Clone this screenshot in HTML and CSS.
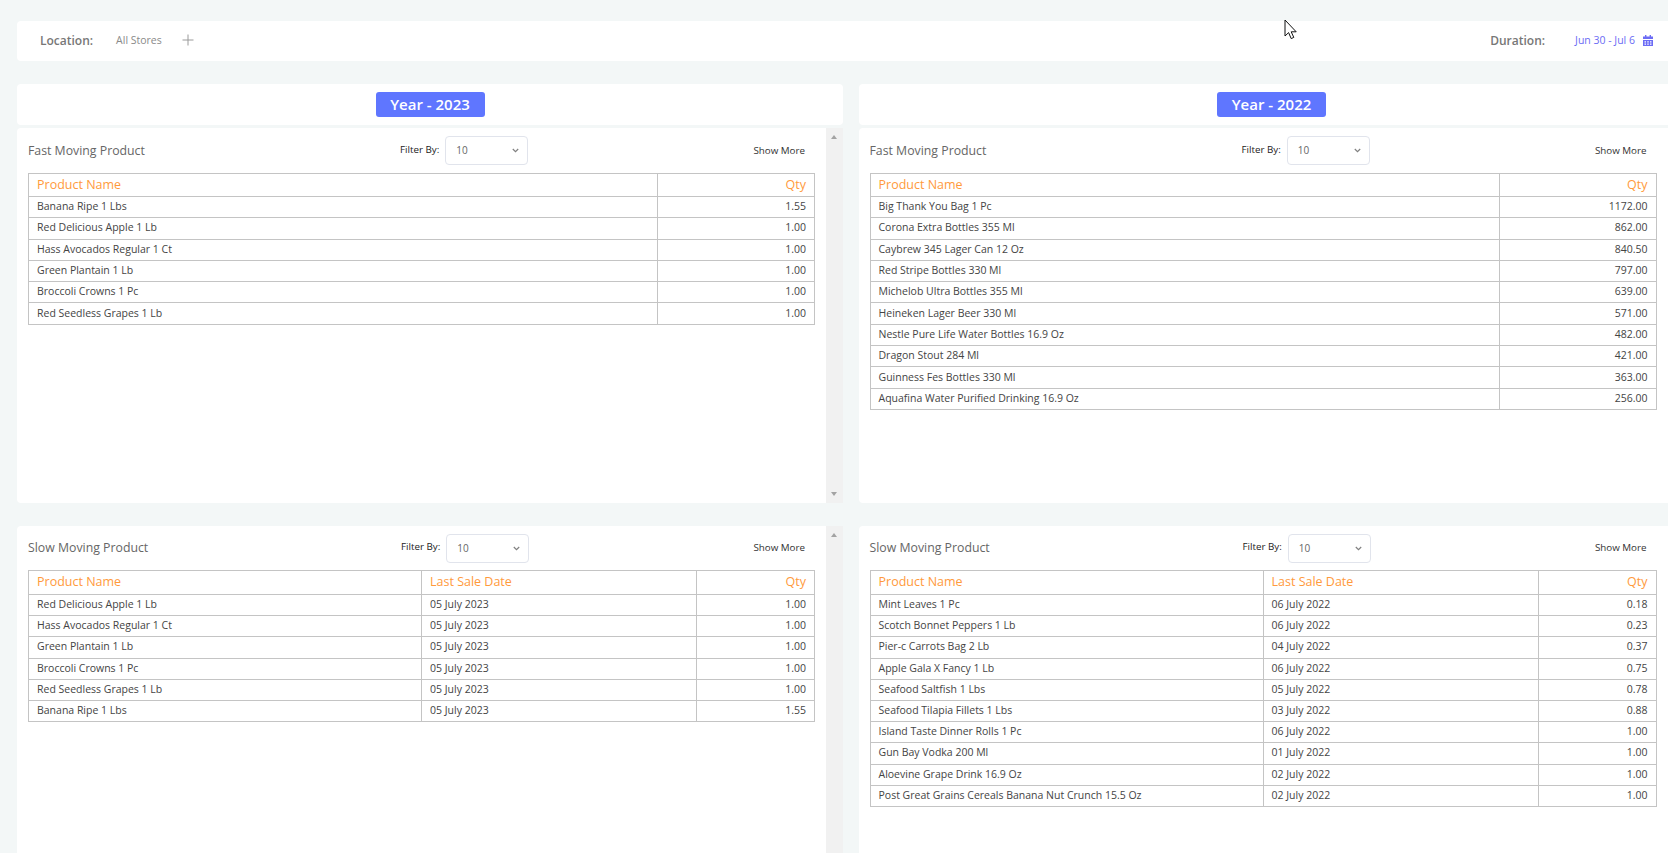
FILE: index.html
```html
<!DOCTYPE html>
<html>
  <head>
    <title>Moving Products</title>
    <link rel="stylesheet" href="styles.css">
  </head>
  <body>
    <div class="topbar">
      <span class="bar-label">Location:</span>
      <span class="stores">All Stores</span>
      <svg class="plus" width="12" height="12" viewBox="0 0 12 12"><path d="M6 0.5V11.5M0.5 6H11.5" stroke="#9a9a9a" stroke-width="1" fill="none"/></svg>
      <span class="bar-label duration">Duration:</span>
      <span class="dates">Jun 30 - Jul 6</span>
      <svg class="calendar" width="10" height="11" viewBox="0 0 10 11"><path d="M2 0h1.4v1.5H6.600V0H8v1.5h2V4H0V1.500h2zM0 5h10v6H0zM1.500 6.200v1.200h1.500V6.200zM4.250 6.200v1.200h1.500V6.200zM7 6.200v1.200h1.500V6.200zM1.500 8.500v1.200h1.500V8.500zM4.250 8.500v1.200h1.500V8.500zM7 8.500v1.200h1.500V8.500z" fill="#6c6cf5" fill-rule="evenodd"/></svg>
    </div>

    <div class="columns">
      <div class="col">
        <div class="yearbar"><span class="badge">Year - 2023</span></div>
        <div class="box">
          <div class="card">
            <div class="head">
              <span class="title">Fast Moving Product</span>
              <span class="filter">Filter By:</span>
              <span class="select">10 <svg width="7" height="5" viewBox="0 0 7 5"><path d="M0.800 1L3.500 3.700L6.200 1" stroke="#808080" stroke-width="1.200" fill="none"/></svg></span>
              <span class="more">Show More</span>
            </div>
            <table>
              <tr><th>Product Name</th><th class="qty qty-fast">Qty</th></tr>
              <tr><td>Banana Ripe 1 Lbs</td><td class="qty">1.55</td></tr>
              <tr><td>Red Delicious Apple 1 Lb</td><td class="qty">1.00</td></tr>
              <tr><td>Hass Avocados Regular 1 Ct</td><td class="qty">1.00</td></tr>
              <tr><td>Green Plantain 1 Lb</td><td class="qty">1.00</td></tr>
              <tr><td>Broccoli Crowns 1 Pc</td><td class="qty">1.00</td></tr>
              <tr><td>Red Seedless Grapes 1 Lb</td><td class="qty">1.00</td></tr>
            </table>
          </div>
          <div class="track"><i class="up"></i><i class="down"></i></div>
        </div>
        <div class="box slow">
          <div class="card">
            <div class="head">
              <span class="title">Slow Moving Product</span>
              <span class="filter">Filter By:</span>
              <span class="select">10 <svg width="7" height="5" viewBox="0 0 7 5"><path d="M0.800 1L3.500 3.700L6.200 1" stroke="#808080" stroke-width="1.200" fill="none"/></svg></span>
              <span class="more">Show More</span>
            </div>
            <table>
              <tr><th class="name-slow">Product Name</th><th class="date">Last Sale Date</th><th class="qty">Qty</th></tr>
              <tr><td>Red Delicious Apple 1 Lb</td><td>05 July 2023</td><td class="qty">1.00</td></tr>
              <tr><td>Hass Avocados Regular 1 Ct</td><td>05 July 2023</td><td class="qty">1.00</td></tr>
              <tr><td>Green Plantain 1 Lb</td><td>05 July 2023</td><td class="qty">1.00</td></tr>
              <tr><td>Broccoli Crowns 1 Pc</td><td>05 July 2023</td><td class="qty">1.00</td></tr>
              <tr><td>Red Seedless Grapes 1 Lb</td><td>05 July 2023</td><td class="qty">1.00</td></tr>
              <tr><td>Banana Ripe 1 Lbs</td><td>05 July 2023</td><td class="qty">1.55</td></tr>
            </table>
          </div>
          <div class="track"><i class="up"></i></div>
        </div>
      </div>

      <div class="col">
        <div class="yearbar"><span class="badge">Year - 2022</span></div>
        <div class="box">
          <div class="card">
            <div class="head">
              <span class="title">Fast Moving Product</span>
              <span class="filter">Filter By:</span>
              <span class="select">10 <svg width="7" height="5" viewBox="0 0 7 5"><path d="M0.800 1L3.500 3.700L6.200 1" stroke="#808080" stroke-width="1.200" fill="none"/></svg></span>
              <span class="more">Show More</span>
            </div>
            <table>
              <tr><th>Product Name</th><th class="qty qty-fast">Qty</th></tr>
              <tr><td>Big Thank You Bag 1 Pc</td><td class="qty">1172.00</td></tr>
              <tr><td>Corona Extra Bottles 355 Ml</td><td class="qty">862.00</td></tr>
              <tr><td>Caybrew 345 Lager Can 12 Oz</td><td class="qty">840.50</td></tr>
              <tr><td>Red Stripe Bottles 330 Ml</td><td class="qty">797.00</td></tr>
              <tr><td>Michelob Ultra Bottles 355 Ml</td><td class="qty">639.00</td></tr>
              <tr><td>Heineken Lager Beer 330 Ml</td><td class="qty">571.00</td></tr>
              <tr><td>Nestle Pure Life Water Bottles 16.9 Oz</td><td class="qty">482.00</td></tr>
              <tr><td>Dragon Stout 284 Ml</td><td class="qty">421.00</td></tr>
              <tr><td>Guinness Fes Bottles 330 Ml</td><td class="qty">363.00</td></tr>
              <tr><td>Aquafina Water Purified Drinking 16.9 Oz</td><td class="qty">256.00</td></tr>
            </table>
          </div>
          <div class="track"></div>
        </div>
        <div class="box slow">
          <div class="card">
            <div class="head">
              <span class="title">Slow Moving Product</span>
              <span class="filter">Filter By:</span>
              <span class="select">10 <svg width="7" height="5" viewBox="0 0 7 5"><path d="M0.800 1L3.500 3.700L6.200 1" stroke="#808080" stroke-width="1.200" fill="none"/></svg></span>
              <span class="more">Show More</span>
            </div>
            <table>
              <tr><th class="name-slow">Product Name</th><th class="date">Last Sale Date</th><th class="qty">Qty</th></tr>
              <tr><td>Mint Leaves 1 Pc</td><td>06 July 2022</td><td class="qty">0.18</td></tr>
              <tr><td>Scotch Bonnet Peppers 1 Lb</td><td>06 July 2022</td><td class="qty">0.23</td></tr>
              <tr><td>Pier-c Carrots Bag 2 Lb</td><td>04 July 2022</td><td class="qty">0.37</td></tr>
              <tr><td>Apple Gala X Fancy 1 Lb</td><td>06 July 2022</td><td class="qty">0.75</td></tr>
              <tr><td>Seafood Saltfish 1 Lbs</td><td>05 July 2022</td><td class="qty">0.78</td></tr>
              <tr><td>Seafood Tilapia Fillets 1 Lbs</td><td>03 July 2022</td><td class="qty">0.88</td></tr>
              <tr><td>Island Taste Dinner Rolls 1 Pc</td><td>06 July 2022</td><td class="qty">1.00</td></tr>
              <tr><td>Gun Bay Vodka 200 Ml</td><td>01 July 2022</td><td class="qty">1.00</td></tr>
              <tr><td>Aloevine Grape Drink 16.9 Oz</td><td>02 July 2022</td><td class="qty">1.00</td></tr>
              <tr><td>Post Great Grains Cereals Banana Nut Crunch 15.5 Oz</td><td>02 July 2022</td><td class="qty">1.00</td></tr>
            </table>
          </div>
          <div class="track"></div>
        </div>
      </div>
    </div>

    <svg class="pointer" width="14" height="21" viewBox="0 0 14 21"><path d="M1 1V17L4.600 13.600L7.200 19.600L9.800 18.400L7.200 12.800H12.200z" fill="#fff" stroke="#111" stroke-width="1"/></svg>
  </body>
</html>
```

FILE: styles.css
```css
html,
body {
  height: 853px;
  overflow: hidden;
}
body {
  margin: 0;
  padding: 21px 0 0 17px;
  background-color: #f3f7f7;
  font-family: "Open Sans", sans-serif;
  color: #444;
  box-sizing: border-box;
}
.topbar {
  display: flex;
  align-items: center;
  height: 40px;
  padding: 0 15px 2px 23px;
  box-sizing: border-box;
  background: #fff;
  border-radius: 4px 0 0 4px;
  font-size: 10.500px;
}
.bar-label {
  font-size: 12px;
  font-weight: 600;
  color: #777;
}
.stores {
  margin-left: 23px;
  color: #8a8a8a;
}
.plus {
  margin-left: 20px;
}
.duration {
  margin-left: auto;
  margin-right: 1px;
}
.dates {
  margin-left: 29px;
  color: #6c6cf5;
}
.calendar {
  margin-left: 8px;
}
.columns {
  display: flex;
  gap: 15.500px;
  margin-top: 23px;
}
.col {
  flex: 0 0 826px;
}
.yearbar {
  display: flex;
  justify-content: center;
  align-items: center;
  height: 41px;
  background: #fff;
  border-radius: 4px;
  margin-bottom: 3px;
}
.badge {
  width: 109px;
  height: 25px;
  line-height: 24px;
  text-align: center;
  background: #5f76ff;
  border-radius: 3px;
  color: #fff;
  font-size: 15px;
  font-weight: 600;
}
.box {
  display: flex;
  height: 375px;
}
.slow {
  margin-top: 23px;
}
.card {
  flex: 1;
  background: #fff;
  border-radius: 4px 0 0 4px;
  padding: 8px 11px 0 11px;
}
.track {
  flex: 0 0 17px;
  position: relative;
  background: #f1f1f1;
}
.up,
.down {
  position: absolute;
  left: 5px;
  width: 0;
  height: 0;
  border-left: 3.5px solid transparent;
  border-right: 3.5px solid transparent;
}
.up {
  top: 7px;
  border-bottom: 4px solid #a3a3a3;
}
.down {
  bottom: 7px;
  border-top: 4px solid #a3a3a3;
}
.head {
  display: flex;
  align-items: center;
  height: 29px;
  margin-bottom: 8px;
}
.slow .head {
  margin-bottom: 7px;
}
.title {
  flex: 0 0 372px;
  font-size: 12.300px;
  color: #666;
  padding-bottom: 1px;
}
.slow .title {
  flex-basis: 373px;
  padding-bottom: 3px;
}
.filter {
  font-size: 9.800px;
  color: #222;
  padding-bottom: 2px;
}
.slow .filter {
  padding-bottom: 4px;
}
.select {
  display: flex;
  justify-content: space-between;
  align-items: center;
  width: 83px;
  height: 29px;
  margin-left: 6px;
  padding: 0 8px 1px 10px;
  box-sizing: border-box;
  border: 1px solid #e1e4ec;
  border-radius: 4px;
  font-size: 10px;
  color: #666;
}
.more {
  margin-left: auto;
  font-size: 9.800px;
  color: #333;
  padding-right: 10px;
  padding-bottom: 1px;
}
.slow .more {
  padding-bottom: 3px;
}
table {
  width: 787px;
  table-layout: fixed;
  border-collapse: collapse;
  font-size: 10.500px;
  color: #444;
}
th,
td {
  border: 1px solid #c4c4c4;
  padding: 0 8px 2px;
  height: 18.300px;
  text-align: left;
  font-weight: 400;
}
th {
  height: 20px;
  font-size: 12.500px;
  color: #ff9a3c;
}
.slow th {
  height: 20px;
  padding-bottom: 3px;
}
.slow td {
  height: 18.200px;
}
td.qty,
th.qty {
  text-align: right;
}
.qty-fast {
  width: 140px;
}
.name-slow {
  width: 376px;
}
.date {
  width: 258px;
}
.pointer {
  position: absolute;
  left: 1284px;
  top: 19px;
}
```
